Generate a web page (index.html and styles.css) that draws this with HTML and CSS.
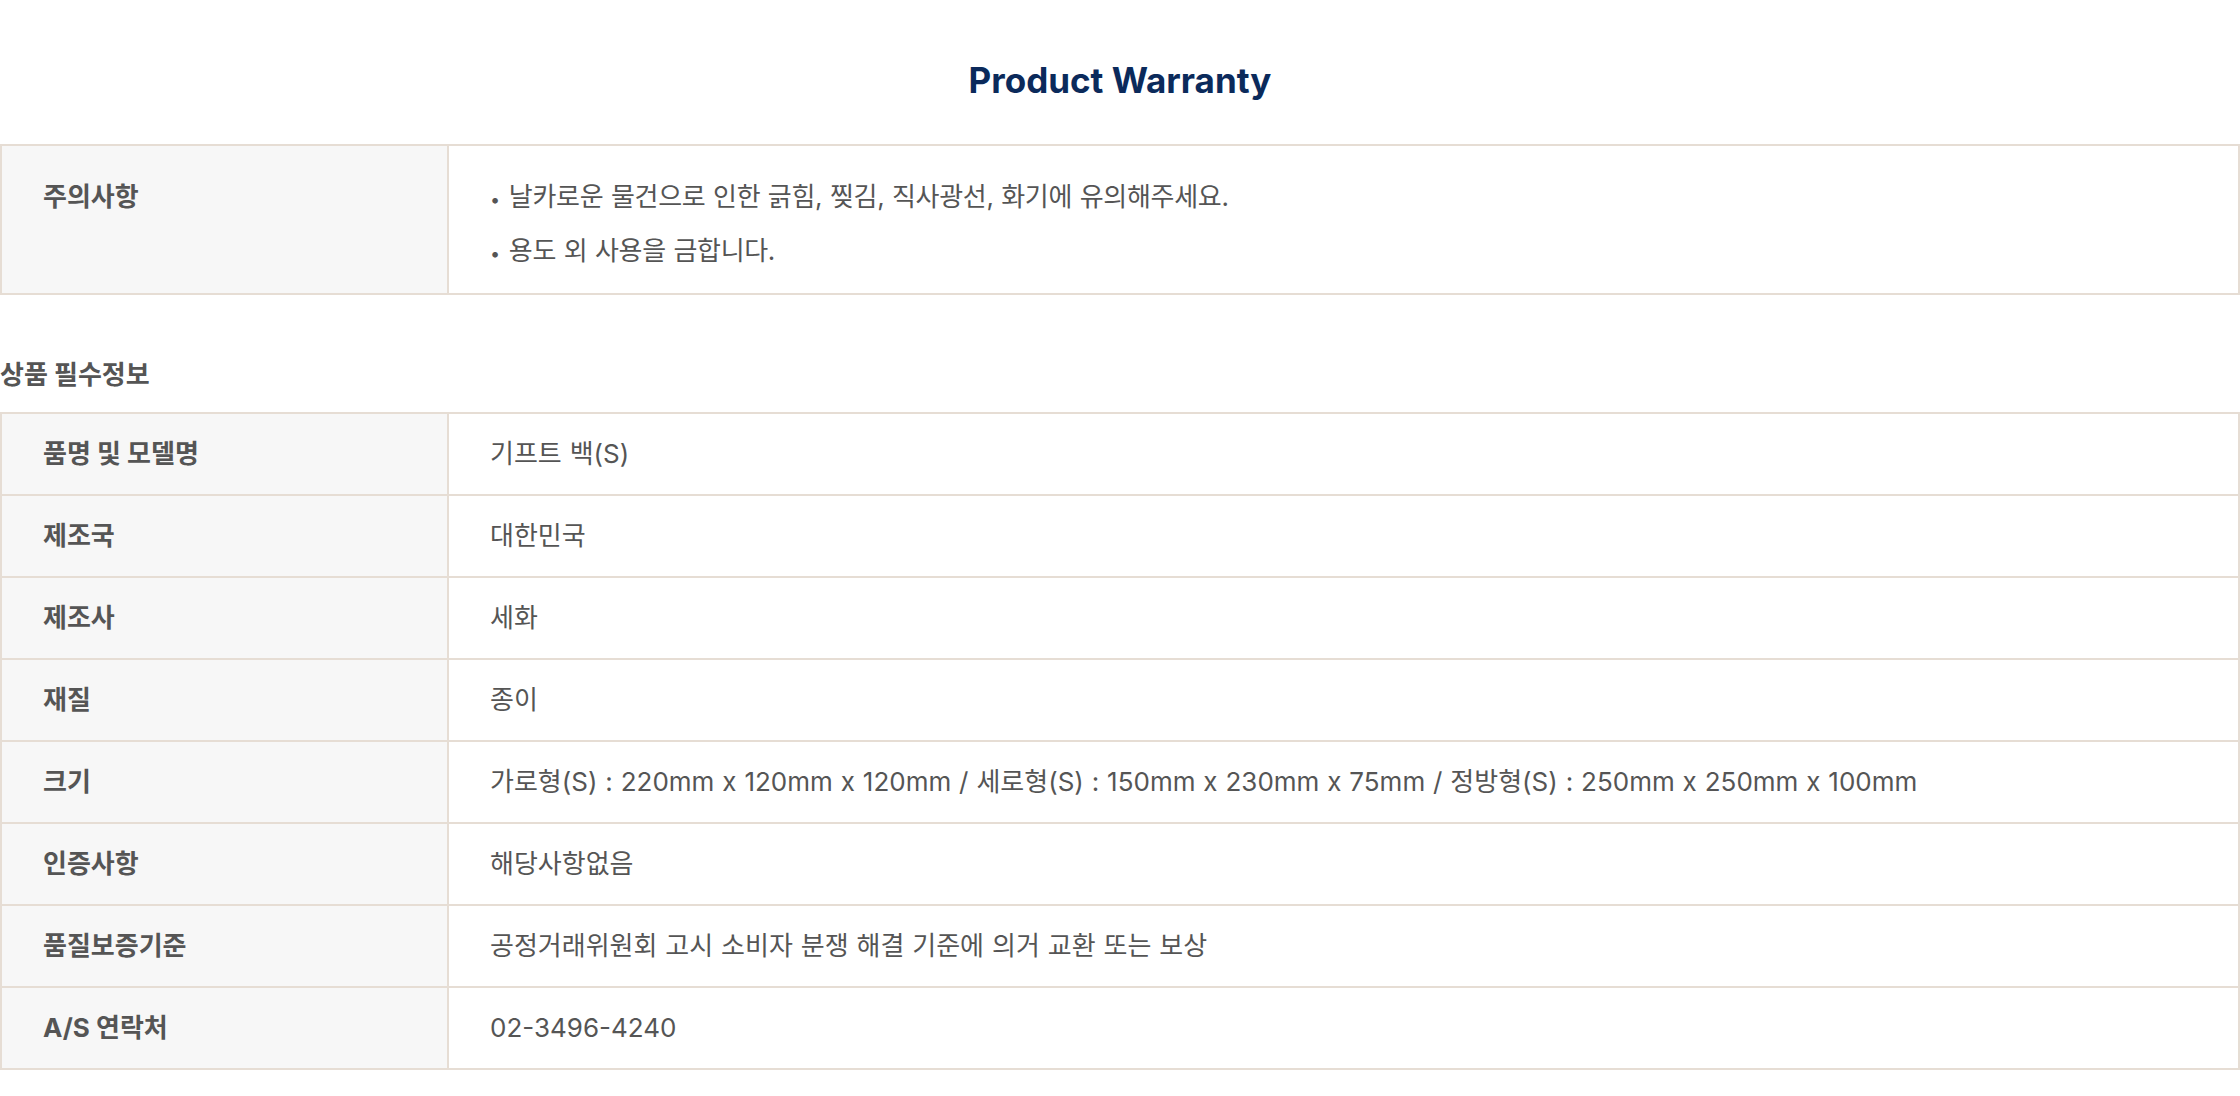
FILE: index.html
```html
<!DOCTYPE html>
<html lang="ko">
<head>
<meta charset="utf-8">
<title>Product Warranty</title>
<link rel="stylesheet" href="styles.css">
</head>
<body>
<h1 class="title">Product Warranty</h1>
<table class="spec caution">
  <tr>
    <th>주의사항</th>
    <td>
      <ul class="bullets">
        <li>날카로운 물건으로 인한 긁힘, 찢김, 직사광선, 화기에 유의해주세요.</li>
        <li>용도 외 사용을 금합니다.</li>
      </ul>
    </td>
  </tr>
</table>
<h2 class="section-title">상품 필수정보</h2>
<table class="spec info">
  <tr><th>품명 및 모델명</th><td>기프트 백(S)</td></tr>
  <tr><th>제조국</th><td>대한민국</td></tr>
  <tr><th>제조사</th><td>세화</td></tr>
  <tr><th>재질</th><td>종이</td></tr>
  <tr><th>크기</th><td>가로형(S) : 220mm x 120mm x 120mm / 세로형(S) : 150mm x 230mm x 75mm / 정방형(S) : 250mm x 250mm x 100mm</td></tr>
  <tr><th>인증사항</th><td>해당사항없음</td></tr>
  <tr><th>품질보증기준</th><td>공정거래위원회 고시 소비자 분쟁 해결 기준에 의거 교환 또는 보상</td></tr>
  <tr><th>A/S 연락처</th><td>02-3496-4240</td></tr>
</table>
</body>
</html>
```
FILE: styles.css
```css
html, body {
  margin: 0;
  padding: 0;
  background: #ffffff;
}
body {
  font-family: Inter, "Noto Sans CJK KR", "Noto Sans", sans-serif;
  color: #555555;
  font-size: 26px;
}
.title {
  margin: 0;
  padding-top: 60px;
  height: 40px;
  font-size: 35px;
  line-height: 40px;
  font-weight: 700;
  letter-spacing: 0;
  color: #0b2a5b;
  text-align: center;
}
.spec {
  width: 100%;
  border-collapse: separate;
  border-spacing: 0;
  border-top: 2px solid #e6ddd4;
  border-left: 2px solid #e6ddd4;
  box-sizing: border-box;
}
.spec th,
.spec td {
  border-right: 2px solid #e6ddd4;
  border-bottom: 2px solid #e6ddd4;
  text-align: left;
  font-size: 26px;
  line-height: 34px;
  letter-spacing: 0;
  color: #555555;
}
.spec th {
  box-sizing: border-box;
  width: 447px;
  background: #f7f7f7;
  font-weight: 700;
  padding: 23px 41px;
}
.spec td {
  font-weight: 400;
  padding: 23px 41px;
  word-spacing: 0.6px;
}
.info th,
.info td {
  height: 80px;
  box-sizing: border-box;
}
.caution {
  margin-top: 44px;
}
.caution th,
.caution td {
  vertical-align: top;
  padding-top: 24px;
  padding-bottom: 15px;
  line-height: 54px;
}
.caution td {
  letter-spacing: -0.3px;
}
.bullets {
  list-style: none;
  margin: 0;
  padding: 0;
}
.bullets li {
  height: 54px;
  white-space: nowrap;
}
.bullets li::before {
  content: "•";
  margin-right: 9px;
  font-size: 18px;
}
.section-title {
  margin: 63px 0 20px;
  height: 34px;
  font-size: 26px;
  line-height: 34px;
  font-weight: 700;
  letter-spacing: 0;
  color: #555555;
}
```
